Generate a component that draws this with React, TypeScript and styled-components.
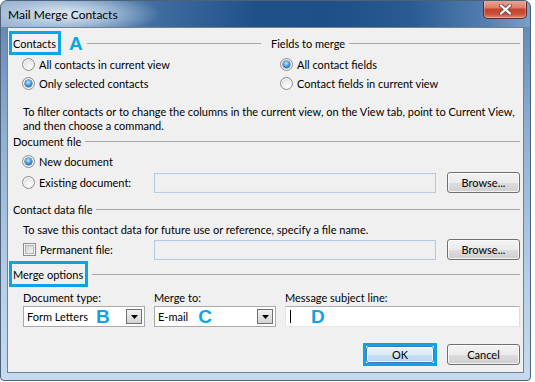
import styled, { createGlobalStyle } from "styled-components";

const ACCENT = "#0ea2e6";
const FONT = `Lato, "Liberation Sans", Arial, sans-serif`;

const GlobalStyle = createGlobalStyle`
  html, body {
    margin: 0;
    padding: 0;
    background: #ffffff;
  }
  body {
    font-family: ${FONT};
    font-size: 11px;
    color: #000;
  }
`;

const Window = styled.div`
  width: 531px;
  height: 381px;
  box-sizing: border-box;
  display: flex;
  flex-direction: column;
  border: 1px solid #4d6178;
  border-radius: 7px 7px 4px 4px;
  overflow: hidden;
  background: linear-gradient(180deg, #5a83b1 0%, #8fb0d4 35%, #b7cfe9 75%, #c6daef 100%);
`;

const TitleBar = styled.div`
  height: 26px;
  flex-shrink: 0;
  display: flex;
  align-items: flex-start;
  background:
    radial-gradient(ellipse 95px 22px at 64px 13px, rgba(236, 243, 250, 0.92) 0%, rgba(214, 228, 243, 0.55) 50%, rgba(200, 220, 240, 0) 100%),
    linear-gradient(90deg, #8eabcb 0%, #6f93bb 12%, #3f6c9f 30%, #1f5189 48%, #1d4f88 62%, #2a5c93 78%, #5480b0 92%, #7c9fc6 100%);
`;

const Title = styled.span`
  margin: 6px 0 0 7px;
  font-size: 12px;
  line-height: 15px;
  color: #000;
`;

const CloseButton = styled.div`
  margin: -1px 3px 0 auto;
  width: 44px;
  height: 19px;
  box-sizing: border-box;
  border: 1px solid #5e2b26;
  border-top: none;
  border-radius: 0 0 5px 5px;
  display: flex;
  align-items: center;
  justify-content: center;
  background: linear-gradient(180deg, #e9aa9b 0%, #dc8069 42%, #c5432c 52%, #c94f38 78%, #e08a70 100%);
  box-shadow: inset 0 0 0 1px rgba(255, 255, 255, 0.28);
`;

const Frame = styled.div`
  flex: 1;
  display: flex;
  min-height: 0;
  padding: 0 6px 7px 6px;
`;

const Client = styled.div`
  flex: 1;
  min-width: 0;
  display: flex;
  flex-direction: column;
  border: 1px solid #6d8199;
  background: #f0f0f0;
  padding: 3px 3px 6px 5px;
  overflow: hidden;
`;

const TwoCols = styled.div`
  display: grid;
  grid-template-columns: 248px 1fr;
  column-gap: 10px;
`;

const Column = styled.div`
  display: flex;
  flex-direction: column;
`;

const GroupHeader = styled.div<{ $h?: number; $top?: number }>`
  display: flex;
  align-items: center;
  height: ${(p) => p.$h ?? 16}px;
  margin-top: ${(p) => p.$top ?? 0}px;
`;

const GroupLabel = styled.span<{ $boxed?: boolean }>`
  display: flex;
  align-items: center;
  line-height: 15px;
  white-space: nowrap;
  ${(p) =>
    p.$boxed
      ? `
    box-sizing: border-box;
    height: 100%;
    border: 3px solid ${ACCENT};
    padding: 0 2px 0 1px;
    margin-left: -4px;
  `
      : ""}
`;

const Rule = styled.div`
  flex: 1;
  height: 1px;
  margin-left: 4px;
  background: #a6a6a6;
`;

const Letter = styled.span<{ $gap?: number }>`
  font-family: "Liberation Sans", Arial, sans-serif;
  font-weight: bold;
  font-size: 19px;
  line-height: 1;
  color: ${ACCENT};
  margin-left: ${(p) => p.$gap ?? 8}px;
`;

const OptionList = styled.div<{ $top?: number }>`
  display: flex;
  flex-direction: column;
  padding-left: 9px;
  margin-top: ${(p) => p.$top ?? 0}px;
`;

const OptionRow = styled.label<{ $h?: number }>`
  display: flex;
  align-items: center;
  gap: 4px;
  height: ${(p) => p.$h ?? 19}px;
  white-space: nowrap;
`;

const RadioCircle = styled.span<{ $checked?: boolean }>`
  width: 13px;
  height: 13px;
  box-sizing: border-box;
  flex-shrink: 0;
  border-radius: 50%;
  border: 1px solid #8b8c8c;
  display: flex;
  align-items: center;
  justify-content: center;
  background: radial-gradient(circle at 65% 70%, #fbfbfb 0%, #ececec 45%, #d3d3d3 100%);
  box-shadow: inset 0 0 0 1px #f7f7f7;
  &::after {
    content: "";
    display: ${(p) => (p.$checked ? "block" : "none")};
    width: 7px;
    height: 7px;
    border-radius: 50%;
    background: radial-gradient(circle at 45% 35%, #c4ecff 0%, #5fb3ef 35%, #1f63ad 78%, #174b86 100%);
    box-shadow: 0 0 0 0.5px #2c5e95;
  }
`;

const CheckBox = styled.span`
  width: 13px;
  height: 13px;
  margin-left: 1px;
  box-sizing: border-box;
  flex-shrink: 0;
  border: 1px solid #8b8c8c;
  background: #f4f4f4;
  display: flex;
  align-items: center;
  justify-content: center;
  &::after {
    content: "";
    width: 9px;
    height: 9px;
    box-sizing: border-box;
    border: 1px solid #b4b4b4;
    background: linear-gradient(135deg, #cfcfcf 0%, #e6e6e6 55%, #f6f6f6 100%);
  }
`;

const Note = styled.p<{ $top?: number }>`
  margin: ${(p) => p.$top ?? 0}px 0 0 0;
  padding-left: 10px;
  line-height: 14px;
  white-space: nowrap;
`;

const FileRow = styled.div<{ $top?: number }>`
  display: grid;
  grid-template-columns: 132px 1fr 84px;
  align-items: center;
  height: 23px;
  padding-left: 9px;
  margin-top: ${(p) => p.$top ?? 0}px;
`;

const DisabledInput = styled.div`
  height: 20px;
  box-sizing: border-box;
  border: 1px solid #b7cbe0;
  background: #f0f0f0;
  box-shadow: inset 0 0 0 1px #e9eef4;
`;

const PushButton = styled.button<{ $default?: boolean }>`
  height: 21px;
  width: 73px;
  box-sizing: border-box;
  padding: 0;
  justify-self: end;
  font-family: ${FONT};
  font-size: 11px;
  color: #000;
  border: 1px solid ${(p) => (p.$default ? "#3c7fb1" : "#707070")};
  border-radius: 3px;
  background: ${(p) =>
    p.$default
      ? "linear-gradient(180deg, #e9f3fb 0%, #dbebf8 50%, #c6e0f4 51%, #bad8f0 100%)"
      : "linear-gradient(180deg, #f3f3f3 0%, #ebebeb 50%, #dddddd 51%, #cfcfcf 100%)"};
  box-shadow: inset 0 0 0 1px rgba(255, 255, 255, 0.75);
`;

const FieldGrid = styled.div`
  display: grid;
  grid-template-columns: 122px 122px 1fr;
  column-gap: 9px;
  row-gap: 1px;
  padding-left: 10px;
  margin-top: 4px;
`;

const FieldLabel = styled.span`
  line-height: 14px;
  white-space: nowrap;
`;

const Combo = styled.div`
  height: 21px;
  box-sizing: border-box;
  border: 1px solid #a9a9a9;
  background: #fff;
  display: flex;
  align-items: center;
  padding-left: 3px;
  white-space: nowrap;
`;

const ComboArrow = styled.span`
  margin-left: auto;
  margin-right: 2px;
  width: 16px;
  height: 15px;
  box-sizing: border-box;
  border: 1px solid #6f6f6f;
  background: linear-gradient(180deg, #f2f2f2 0%, #e4e4e4 50%, #d4d4d4 100%);
  display: flex;
  align-items: center;
  justify-content: center;
`;

const TextBox = styled.div`
  height: 21px;
  box-sizing: border-box;
  border: 1px solid #abadb3;
  border-bottom-color: #e3e9ef;
  border-left-color: #e2e3ea;
  border-right-color: #dbdfe6;
  background: #fff;
  display: flex;
  align-items: center;
  padding-left: 4px;
`;

const Caret = styled.span`
  width: 1px;
  height: 13px;
  background: #000;
`;

const ButtonBar = styled.div`
  display: flex;
  justify-content: flex-end;
  align-items: center;
  gap: 10px;
  margin-top: 17px;
`;

const Highlight = styled.div`
  border: 3px solid ${ACCENT};
  display: flex;
  margin: -1px 0;
`;

function Radio({ label, checked }: { label: string; checked?: boolean }) {
  return (
    <OptionRow>
      <RadioCircle $checked={checked} />
      {label}
    </OptionRow>
  );
}

function DropArrow() {
  return (
    <svg width="7" height="4" viewBox="0 0 7 4">
      <path d="M0 0h7L3.5 4z" fill="#000" />
    </svg>
  );
}

export default function App() {
  return (
    <>
      <GlobalStyle />
      <Window>
        <TitleBar>
          <Title>Mail Merge Contacts</Title>
          <CloseButton>
            <svg width="13" height="11" viewBox="0 0 13 11">
              <path d="M2 1.5l9 8M11 1.5l-9 8" stroke="#6b4a48" strokeWidth="4" strokeLinecap="round" />
              <path d="M2 1.5l9 8M11 1.5l-9 8" stroke="#fff" strokeWidth="2.3" strokeLinecap="round" />
            </svg>
          </CloseButton>
        </TitleBar>
        <Frame>
          <Client>
            <TwoCols>
              <Column>
                <GroupHeader $h={24}>
                  <GroupLabel $boxed>Contacts</GroupLabel>
                  <Letter>A</Letter>
                  <Rule />
                </GroupHeader>
                <OptionList>
                  <Radio label="All contacts in current view" />
                  <Radio label="Only selected contacts" checked />
                </OptionList>
              </Column>
              <Column>
                <GroupHeader $h={24}>
                  <GroupLabel>Fields to merge</GroupLabel>
                  <Rule />
                </GroupHeader>
                <OptionList>
                  <Radio label="All contact fields" checked />
                  <Radio label="Contact fields in current view" />
                </OptionList>
              </Column>
            </TwoCols>

            <Note $top={12}>
              To filter contacts or to change the columns in the current view, on the View tab, point to Current View,
              <br />
              and then choose a command.
            </Note>

            <GroupHeader>
              <GroupLabel>Document file</GroupLabel>
              <Rule />
            </GroupHeader>
            <OptionList $top={3}>
              <Radio label="New document" checked />
            </OptionList>
            <FileRow>
              <OptionRow $h={23}>
                <RadioCircle />
                Existing document:
              </OptionRow>
              <DisabledInput />
              <PushButton>Browse...</PushButton>
            </FileRow>

            <GroupHeader $top={7}>
              <GroupLabel>Contact data file</GroupLabel>
              <Rule />
            </GroupHeader>
            <Note $top={6}>To save this contact data for future use or reference, specify a file name.</Note>
            <FileRow $top={1}>
              <OptionRow $h={23}>
                <CheckBox />
                Permanent file:
              </OptionRow>
              <DisabledInput />
              <PushButton>Browse...</PushButton>
            </FileRow>

            <GroupHeader $h={26}>
              <GroupLabel $boxed>Merge options</GroupLabel>
              <Rule />
            </GroupHeader>
            <FieldGrid>
              <FieldLabel>Document type:</FieldLabel>
              <FieldLabel>Merge to:</FieldLabel>
              <FieldLabel>Message subject line:</FieldLabel>
              <Combo>
                Form Letters
                <Letter>B</Letter>
                <ComboArrow>
                  <DropArrow />
                </ComboArrow>
              </Combo>
              <Combo>
                E-mail
                <Letter $gap={10}>C</Letter>
                <ComboArrow>
                  <DropArrow />
                </ComboArrow>
              </Combo>
              <TextBox>
                <Caret />
                <Letter $gap={20}>D</Letter>
              </TextBox>
            </FieldGrid>

            <ButtonBar>
              <Highlight>
                <PushButton $default style={{ width: 68, height: 17 }}>
                  OK
                </PushButton>
              </Highlight>
              <PushButton>Cancel</PushButton>
            </ButtonBar>
          </Client>
        </Frame>
      </Window>
    </>
  );
}
